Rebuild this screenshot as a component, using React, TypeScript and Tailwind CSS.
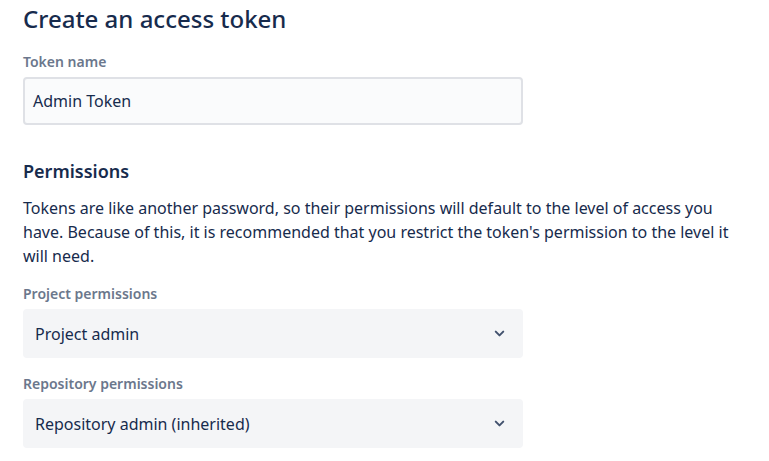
import { ChevronDown } from 'lucide-react';

const font = { fontFamily: '"Noto Sans", "Open Sans", sans-serif' };

function Field({ label, children }: { label: string; children: React.ReactNode }) {
  return (
    <div>
      <p className="mb-[5px] text-[14px] font-semibold leading-[20px] text-[#6B778C]">{label}</p>
      {children}
    </div>
  );
}

function Select({ value }: { value: string }) {
  return (
    <div className="flex h-[49px] w-[500px] items-center justify-between rounded-[4px] bg-[#F4F5F7] pl-[12px] pr-[16px]">
      <span className="text-[16px] text-[#172B4D]">{value}</span>
      <ChevronDown className="h-[15px] w-[15px] text-[#42526E]" strokeWidth={3.2} />
    </div>
  );
}

export default function App() {
  return (
    <div className="min-h-screen bg-white px-[23px] pt-[4px]" style={font}>
      <h1 className="text-[24px] font-medium leading-[30px] text-[#172B4D]">Create an access token</h1>

      <div className="mt-[18px]">
        <Field label="Token name">
          <div className="flex h-[48px] w-[500px] items-center rounded-[4px] border-2 border-[#DFE1E6] bg-[#FAFBFC] px-[8px]">
            <span className="text-[16px] text-[#172B4D]">Admin Token</span>
          </div>
        </Field>
      </div>

      <h2 className="mt-[34px] text-[18px] font-semibold leading-[24px] text-[#172B4D]">Permissions</h2>
      <p className="mt-[13px] max-w-[730px] text-[16px] leading-[24px] text-[#172B4D]">
        Tokens are like another password, so their permissions will default to the level of access you have. Because of
        this, it is recommended that you restrict the token's permission to the level it will need.
      </p>

      <div className="mt-[16px] flex flex-col gap-[16px]">
        <Field label="Project permissions">
          <Select value="Project admin" />
        </Field>
        <Field label="Repository permissions">
          <Select value="Repository admin (inherited)" />
        </Field>
      </div>
    </div>
  );
}
